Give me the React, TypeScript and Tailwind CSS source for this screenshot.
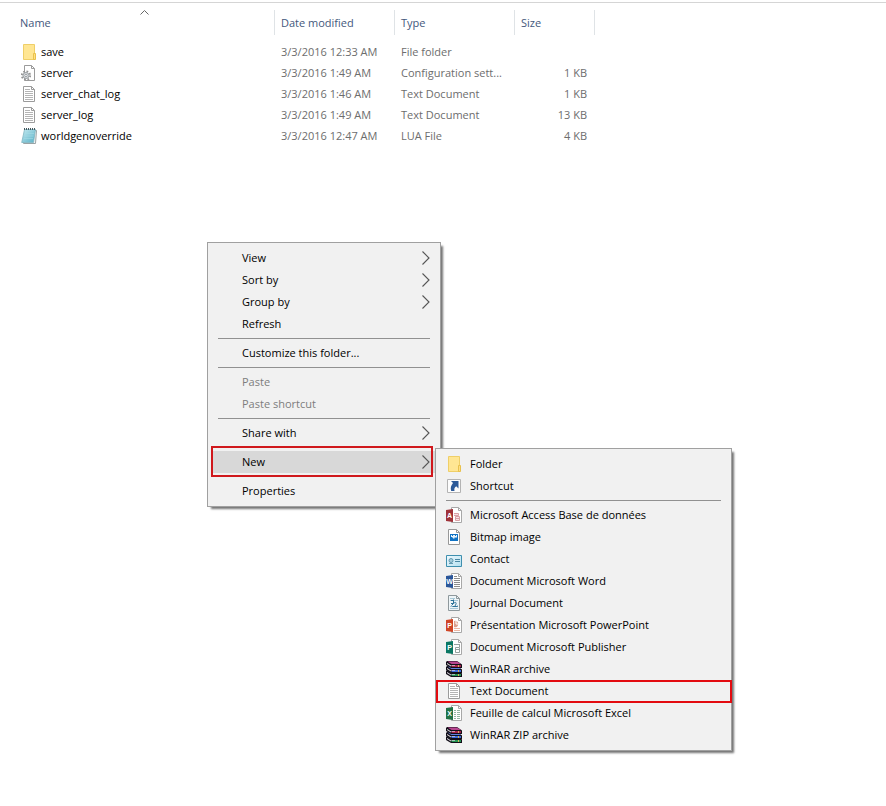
import type { ReactNode } from "react";

function Icon({ children }: { children: ReactNode }) {
  return (
    <svg width="16" height="16" viewBox="0 0 16 16" className="shrink-0" aria-hidden="true">
      {children}
    </svg>
  );
}

function FolderIcon() {
  return (
    <Icon>
      <path d="M2.5.5h11v15h-11z" fill="#ffe693" stroke="#efcf68" />
      <path d="M12.5 9.5h2v6h-2z" fill="#ffe083" stroke="#e9c14d" />
    </Icon>
  );
}

function Page({ stroke = "#9b9b9b", fill = "#fff" }: { stroke?: string; fill?: string }) {
  return (
    <>
      <path d="M2.5.5h8l3 3v12h-11z" fill={fill} stroke={stroke} />
      <path d="M10.5.5v3h3" fill="none" stroke={stroke} />
    </>
  );
}

function TextIcon() {
  return (
    <Icon>
      <Page />
      <path d="M4 3.5h5M4 5.5h8M4 7.5h8M4 9.5h8M4 11.5h8M4 13.5h8" stroke="#b4b4b4" />
    </Icon>
  );
}

function ConfigIcon() {
  return (
    <Icon>
      <path d="M3.5.5h7l3 3v12h-10z" fill="#fff" stroke="#9b9b9b" />
      <path d="M10.5.5v3h3" fill="none" stroke="#9b9b9b" />
      <circle cx="5" cy="10.5" r="4.2" fill="none" stroke="#929292" strokeWidth="1.8" strokeDasharray="1.7 1.6" />
      <circle cx="5" cy="10.5" r="3" fill="#dcdfe2" stroke="#9a9fa3" />
      <circle cx="5" cy="10.5" r="1.2" fill="#fff" stroke="#9a9fa3" />
    </Icon>
  );
}

function NotepadIcon() {
  return (
    <Icon>
      <defs>
        <linearGradient id="notepad" x1="0" y1="0" x2="1" y2="1">
          <stop offset="0" stopColor="#c5eaf1" />
          <stop offset="1" stopColor="#58b0c6" />
        </linearGradient>
      </defs>
      <path d="M5 2.5h10.5l-1 13h-12z" fill="#f4f4f4" stroke="#9aa3a5" />
      <path d="M3.5 1.5h11L12.5 14.500H.7z" fill="url(#notepad)" stroke="#7fb5c1" strokeWidth=".8" />
      <path d="M3 1h12" stroke="#46575c" strokeWidth="2" strokeDasharray="1 1" />
      <path d="M4 5.5h9M3.5 8h9M3 10.5h9" stroke="#a4dbe5" strokeWidth=".6" />
    </Icon>
  );
}

function ShortcutIcon() {
  return (
    <Icon>
      <path d="M1.5 1.5h13v13h-13z" fill="#fcfcfc" stroke="#b3b3b3" />
      <path d="M5 3h7.5v7.5L10.2 8.2C8.500 9.200 8 11 8.500 13H5.200C4.200 10 5 7.500 7 5z" fill="#2c5a99" />
    </Icon>
  );
}

function OfficeIcon({ letter, color, children }: { letter: string; color: string; children: ReactNode }) {
  return (
    <Icon>
      <path d="M5.5.5h7l3 3v12h-10z" fill="#fff" stroke="#a8a8a8" />
      <path d="M12.5.5v3h3" fill="none" stroke="#a8a8a8" />
      {children}
      <path d="M0 3 7 2v13L0 14z" fill={color} />
      <text x="3.5" y="11" textAnchor="middle" fontSize="7" fontWeight="700" fill="#fff" className="font-['Liberation_Sans',sans-serif]">
        {letter}
      </text>
    </Icon>
  );
}

function AccessIcon() {
  return (
    <OfficeIcon letter="A" color="#9f3138">
      <path d="M8 6.5h4.5v2H8M9.5 9.5h4v4h-4zM9.5 11.5h4" fill="#f8e4e5" stroke="#d9a0a5" />
    </OfficeIcon>
  );
}

function WordIcon() {
  return (
    <OfficeIcon letter="W" color="#2a5699">
      <path d="M8 3.5h3M8 5.5h6M8 7.5h6M8 9.5h6M8 11.5h6M8 13.5h6" stroke="#8d8d8d" />
    </OfficeIcon>
  );
}

function PowerPointIcon() {
  return (
    <OfficeIcon letter="P" color="#d04526">
      <path d="M8 11.5h6M8 13.5h6" stroke="#ebb7a5" />
      <path d="M8 4a3.200 3.200 0 1 1 0 6z" fill="#dba08d" />
      <path d="M10 4v3h3" fill="none" stroke="#fff" />
    </OfficeIcon>
  );
}

function PublisherIcon() {
  return (
    <OfficeIcon letter="P" color="#0b7763">
      <path d="M8 5.5h5.5M13.5 5v3M9.5 8.5h4v5h-4zM9.5 10.5h4" fill="none" stroke="#95a19e" />
    </OfficeIcon>
  );
}

function ExcelIcon() {
  return (
    <OfficeIcon letter="X" color="#207245">
      <path d="M8 5.5h2M11 5.5h3M8 7.5h2M11 7.5h3M8 9.5h2M11 9.5h3M8 11.5h2M11 11.5h3M8 13.5h2M11 13.5h3" stroke="#94b8a2" />
    </OfficeIcon>
  );
}

function BitmapIcon() {
  return (
    <Icon>
      <Page stroke="#989898" />
      <path d="M4 5h8v7H4z" fill="#0f72c4" />
      <path d="M5 6h6v2l-1 1-1-1-1 2-2-2H5z" fill="#e9f5fd" />
      <path d="M6 6h1v1H6zM9 6h1v1H9z" fill="#0f72c4" />
    </Icon>
  );
}

function ContactIcon() {
  return (
    <Icon>
      <defs>
        <linearGradient id="contact" x1="0" y1="0" x2="1" y2="1">
          <stop offset="0" stopColor="#f0faff" />
          <stop offset="1" stopColor="#b3dfef" />
        </linearGradient>
      </defs>
      <path d="M.5 4.5h15v11H.5z" fill="url(#contact)" stroke="#3f8fae" />
      <circle cx="5" cy="9.5" r="2" fill="#a6cddc" stroke="#6299b0" />
      <path d="M3 12.5h4" stroke="#6299b0" />
      <path d="M9 8.5h5M9 10.5h5" stroke="#4a87a3" />
    </Icon>
  );
}

function JournalIcon() {
  return (
    <Icon>
      <Page stroke="#8e989c" fill="#eef5f8" />
      <path d="M4 3.5h5M4 5.5h8M4 11.5h8M4 13.5h8" stroke="#a9c9d8" />
      <path d="M5 5.5h3M7.5 4.5v4l-2 2M5 8.5h2.5c2-2 3.500-1 2 1.500s1.500 1.500 2.500 1M6.500 11.500h4" fill="none" stroke="#2c7299" />
    </Icon>
  );
}

function RarBook({ y, cover, spine }: { y: number; cover: string; spine: string }) {
  return (
    <g transform={`translate(0 ${y})`}>
      <path d="M0 1 1 0h10l5 3.500V7H5L0 4z" fill="#120f18" />
      <path d="M1.500.5H11L15 3H5.500z" fill={cover} />
      <path d="M1 2l4 2.500v1L1 3z" fill="#e7e2e8" />
      <path d="M5.500 4H15v2H5.500z" fill={spine} />
      <path d="M5.500 4H9v1H5.500z" fill="#dcd5e2" fillOpacity=".7" />
      <path d="M12 4h1v2h-1z" fill="#d8b45c" />
    </g>
  );
}

function RarIcon() {
  return (
    <Icon>
      <RarBook y={9} cover="#43a866" spine="#239350" />
      <RarBook y={5} cover="#5f7ee0" spine="#3a6cda" />
      <RarBook y={0} cover="#b8448f" spine="#a3204a" />
    </Icon>
  );
}

const files = [
  { icon: <FolderIcon />, name: "save", date: "3/3/2016 12:33 AM", type: "File folder", size: "" },
  { icon: <ConfigIcon />, name: "server", date: "3/3/2016 1:49 AM", type: "Configuration sett...", size: "1 KB" },
  { icon: <TextIcon />, name: "server_chat_log", date: "3/3/2016 1:46 AM", type: "Text Document", size: "1 KB" },
  { icon: <TextIcon />, name: "server_log", date: "3/3/2016 1:49 AM", type: "Text Document", size: "13 KB" },
  { icon: <NotepadIcon />, name: "worldgenoverride", date: "3/3/2016 12:47 AM", type: "LUA File", size: "4 KB" },
];

const newItems = [
  { icon: <AccessIcon />, label: "Microsoft Access Base de données" },
  { icon: <BitmapIcon />, label: "Bitmap image" },
  { icon: <ContactIcon />, label: "Contact" },
  { icon: <WordIcon />, label: "Document Microsoft Word" },
  { icon: <JournalIcon />, label: "Journal Document" },
  { icon: <PowerPointIcon />, label: "Présentation Microsoft PowerPoint" },
  { icon: <PublisherIcon />, label: "Document Microsoft Publisher" },
  { icon: <RarIcon />, label: "WinRAR archive" },
  { icon: <TextIcon />, label: "Text Document", marked: true },
  { icon: <ExcelIcon />, label: "Feuille de calcul Microsoft Excel" },
  { icon: <RarIcon />, label: "WinRAR ZIP archive" },
];

function Separator() {
  return <hr className="mx-[10px] my-[3px] border-t border-[#919191]" />;
}

function Chevron() {
  return (
    <svg width="8" height="14" viewBox="0 0 8 14" className="ml-auto shrink-0" aria-hidden="true">
      <path d="M.5.5 7 7 .5 13.5" fill="none" stroke="#555" strokeWidth="1.1" />
    </svg>
  );
}

type ItemProps = { label: string; submenu?: boolean; disabled?: boolean; active?: boolean };

function MenuItem({ label, submenu, disabled, active }: ItemProps) {
  return (
    <div className={`relative px-[3px] ${disabled ? "text-[#7d7d7d]" : ""}`}>
      <button
        type="button"
        role="menuitem"
        disabled={disabled}
        className={`flex h-[22px] w-full items-center pr-[7px] pl-[31px] text-left ${active ? "bg-[#d8d8d8]" : ""}`}
      >
        {label}
        {submenu && <Chevron />}
      </button>
      {active && (
        <span className="pointer-events-none absolute -top-[5px] right-[7px] -bottom-1 left-[3px] border-2 border-[#d0181c]" />
      )}
    </div>
  );
}

function NewItem({ icon, label, marked }: { icon: ReactNode; label: string; marked?: boolean }) {
  return (
    <button type="button" role="menuitem" className="relative flex h-[22px] w-full items-center gap-2 px-[10px] text-left">
      {icon}
      {label}
      {marked && <span className="absolute top-0 -right-px -bottom-px left-0 border-2 border-[#e30b10]" />}
    </button>
  );
}

const menuClass = "absolute border border-[#a0a0a0] bg-[#f1f1f1] py-1 shadow-[3px_3px_2px_-1px_rgba(0,0,0,0.55)]";
const headClass = "h-[25px] border-r border-[#dfe3e6] p-0 pl-[6px] text-left font-normal";

export default function App() {
  return (
    <div className="relative min-h-screen bg-white pt-[2px] font-['Open_Sans','Noto_Sans',sans-serif] text-[11px] leading-4 text-black">
      <main className="min-h-[804px] border-t border-[#d5d5d5] pt-[7px]">
        <table className="w-[595px] table-fixed border-separate border-spacing-0">
          <colgroup>
            <col className="w-[275px]" />
            <col className="w-[120px]" />
            <col className="w-[120px]" />
            <col className="w-[80px]" />
          </colgroup>
          <thead className="text-[#44587c]">
            <tr>
              <th scope="col" className="relative h-[25px] border-r border-[#dfe3e6] p-0 pl-5 text-left font-normal">
                <button type="button">Name</button>
                <svg width="9" height="5" viewBox="0 0 9 5" className="absolute top-0 left-[140px]" aria-hidden="true">
                  <path d="M.5 4.5l4-4 4 4" fill="none" stroke="#666" />
                </svg>
              </th>
              <th scope="col" className={headClass}><button type="button">Date modified</button></th>
              <th scope="col" className={headClass}><button type="button">Type</button></th>
              <th scope="col" className={headClass}><button type="button">Size</button></th>
            </tr>
          </thead>
          <tbody className="text-[#6d6d6d] before:block before:h-[6px]">
            {files.map((file) => (
              <tr key={file.name}>
                <td className="h-[21px] p-0 pl-[21px] text-black">
                  <span className="flex items-center gap-1">
                    {file.icon}
                    {file.name}
                  </span>
                </td>
                <td className="p-0 pl-[6px] whitespace-nowrap">{file.date}</td>
                <td className="p-0 pl-[6px] whitespace-nowrap">{file.type}</td>
                <td className="p-0 pr-2 text-right whitespace-nowrap">{file.size}</td>
              </tr>
            ))}
          </tbody>
        </table>
      </main>

      <div role="menu" aria-label="Folder" className={`${menuClass} top-[242px] left-[207px] w-[234px]`}>
        <MenuItem label="View" submenu />
        <MenuItem label="Sort by" submenu />
        <MenuItem label="Group by" submenu />
        <MenuItem label="Refresh" />
        <Separator />
        <MenuItem label="Customize this folder..." />
        <Separator />
        <MenuItem label="Paste" disabled />
        <MenuItem label="Paste shortcut" disabled />
        <Separator />
        <MenuItem label="Share with" submenu />
        <Separator />
        <MenuItem label="New" submenu active />
        <Separator />
        <MenuItem label="Properties" />
      </div>

      <div role="menu" aria-label="New" className={`${menuClass} top-[448px] left-[435px] w-[297px]`}>
        <NewItem icon={<FolderIcon />} label="Folder" />
        <NewItem icon={<ShortcutIcon />} label="Shortcut" />
        <Separator />
        {newItems.map((item) => (
          <NewItem key={item.label} {...item} />
        ))}
      </div>
    </div>
  );
}
